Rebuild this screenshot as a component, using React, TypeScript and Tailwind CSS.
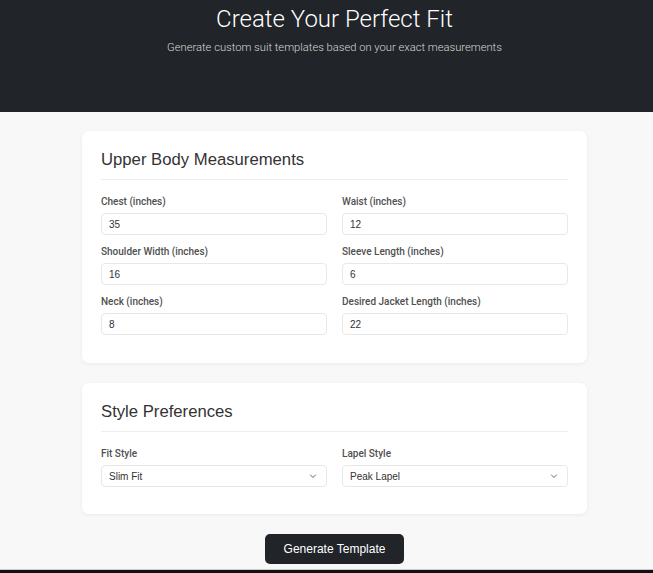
import React from 'react';

const upper = [
  { label: 'Chest (inches)', value: '35' },
  { label: 'Waist (inches)', value: '12' },
  { label: 'Shoulder Width (inches)', value: '16' },
  { label: 'Sleeve Length (inches)', value: '6' },
  { label: 'Neck (inches)', value: '8' },
  { label: 'Desired Jacket Length (inches)', value: '22' },
];

function Chevron() {
  return (
    <svg width="8" height="8" viewBox="0 0 16 16" fill="none" className="text-[#555]">
      <path d="M3 6l5 5 5-5" stroke="currentColor" strokeWidth="1.8" strokeLinecap="round" strokeLinejoin="round" />
    </svg>
  );
}

function Label({ children }: { children: React.ReactNode }) {
  return (
    <div className="mt-[1px] text-[10px] leading-[12px] font-['Roboto',sans-serif] font-medium text-[#505050] mb-[5px]">
      {children}
    </div>
  );
}

function Field({ label, value }: { label: string; value: string }) {
  return (
    <div>
      <Label>{label}</Label>
      <div className="h-[22px] border border-[#e8e8e8] rounded-[4px] bg-white px-[7px] flex items-center text-[10px] text-[#333]">
        {value}
      </div>
    </div>
  );
}

function SelectField({ label, value }: { label: string; value: string }) {
  return (
    <div>
      <Label>{label}</Label>
      <div className="h-[22px] border border-[#e8e8e8] rounded-[4px] bg-white pl-[7px] pr-[9px] flex items-center justify-between text-[10px] text-[#333]">
        <span>{value}</span>
        <Chevron />
      </div>
    </div>
  );
}

export default function App() {
  return (
    <div className="min-h-screen bg-[#f8f8f8] font-['Liberation_Sans',Arial,sans-serif]">
      {/* Hero */}
      <header className="bg-[#212428] text-white pt-[3px] pb-[55px] pl-[16px] text-center">
        <h1 className="text-[24px] leading-[32px] font-['Roboto',sans-serif] font-light">Create Your Perfect Fit</h1>
        <p className="mt-[4px] text-[11.2px] leading-[18px] text-[#d8d8d8] font-['Roboto',sans-serif] font-light">
          Generate custom suit templates based on your exact measurements
        </p>
      </header>

      <main className="pl-[16px] pt-[19px] pb-[5px]">
        <div className="w-[505px] mx-auto flex flex-col gap-[20px]">
          {/* Upper body */}
          <section className="bg-white rounded-[7px] shadow-[0_1px_4px_rgba(0,0,0,0.06)] px-[19px] pt-[19px] pb-[28px]">
            <h2 className="text-[16.7px] leading-[20px] text-[#333] pb-[9px] border-b border-[#eee]">Upper Body Measurements</h2>
            <div className="grid grid-cols-2 gap-x-[15px] gap-y-[10px] mt-[15px]">
              {upper.map((f) => (
                <Field key={f.label} label={f.label} value={f.value} />
              ))}
            </div>
          </section>

          {/* Style */}
          <section className="bg-white rounded-[7px] shadow-[0_1px_4px_rgba(0,0,0,0.06)] px-[19px] pt-[19px] pb-[27px]">
            <h2 className="text-[16.7px] leading-[20px] text-[#333] pb-[9px] border-b border-[#eee]">Style Preferences</h2>
            <div className="grid grid-cols-2 gap-x-[15px] mt-[15px]">
              <SelectField label="Fit Style" value="Slim Fit" />
              <SelectField label="Lapel Style" value="Peak Lapel" />
            </div>
          </section>
        </div>

        <div className="flex justify-center mt-[20px]">
          <button className="h-[30px] w-[139px] rounded-[5px] bg-[#212428] text-white text-[12px]">Generate Template</button>
        </div>
      </main>

      <footer className="border-t border-[#ccc] bg-[#111] h-[40px]" />
    </div>
  );
}
